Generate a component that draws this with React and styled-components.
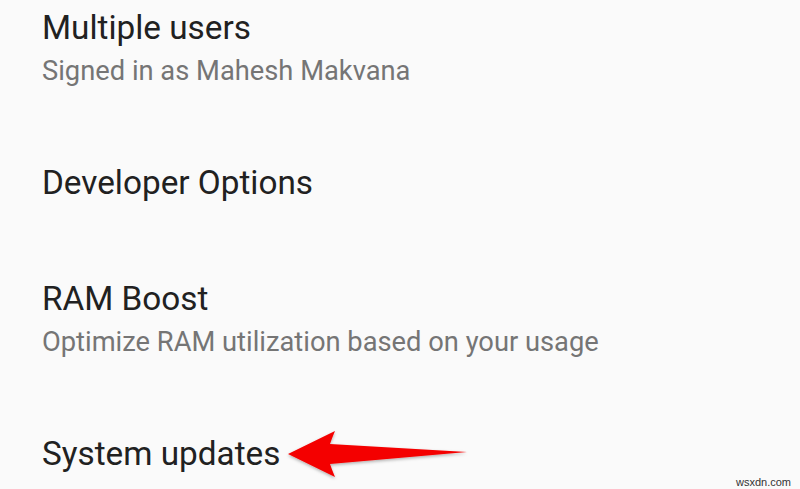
import styled, { createGlobalStyle } from 'styled-components';

const GlobalStyle = createGlobalStyle`
  html, body {
    margin: 0;
    padding: 0;
    background: #fafafa;
  }
  body {
    font-family: Roboto, "Noto Sans", "Liberation Sans", sans-serif;
  }
`;

const Screen = styled.div`
  position: relative;
  width: 800px;
  height: 489px;
  overflow: hidden;
  background: #fafafa;
`;

const SettingsList = styled.ul`
  list-style: none;
  margin: 0;
  padding: 8px 0 0 42px;
  display: flex;
  flex-direction: column;
  gap: 76px;
`;

const SettingItem = styled.li`
  display: flex;
  flex-direction: column;
  gap: 7px;
`;

const TitleRow = styled.div`
  display: flex;
  align-items: center;
  gap: 6px;
  height: 40px;
`;

const Title = styled.span`
  font-size: 33.3px;
  line-height: 40px;
  color: #212121;
`;

const Summary = styled.span`
  font-size: 27.3px;
  line-height: 32px;
  color: #757575;
`;

const ArrowSvg = styled.svg`
  flex: none;
  margin: -7px 0;
`;

const Watermark = styled.span`
  position: absolute;
  right: 9px;
  bottom: 1px;
  font-family: "Liberation Sans", Arial, sans-serif;
  font-size: 11px;
  color: #333;
`;

function PointerArrow() {
  return (
    <ArrowSvg width="186" height="54" viewBox="0 0 186 54">
      <defs>
        <filter id="arrowShadow" x="-10%" y="-20%" width="120%" height="150%">
          <feDropShadow dx="0" dy="1.5" stdDeviation="1.5" floodColor="#000" floodOpacity="0.3" />
        </filter>
      </defs>
      <path
        d="M2 27 L49 4 Q46 11 44 17 L181 25 L44 37 Q46 43 49 50 Z"
        fill="#f40000"
        filter="url(#arrowShadow)"
      />
    </ArrowSvg>
  );
}

const items = [
  { title: 'Multiple users', summary: 'Signed in as Mahesh Makvana' },
  { title: 'Developer Options' },
  { title: 'RAM Boost', summary: 'Optimize RAM utilization based on your usage' },
  { title: 'System updates', marked: true },
];

export default function App() {
  return (
    <Screen>
      <GlobalStyle />
      <SettingsList>
        {items.map((item) => (
          <SettingItem key={item.title}>
            <TitleRow>
              <Title>{item.title}</Title>
              {item.marked && <PointerArrow />}
            </TitleRow>
            {item.summary && <Summary>{item.summary}</Summary>}
          </SettingItem>
        ))}
      </SettingsList>
      <Watermark>wsxdn.com</Watermark>
    </Screen>
  );
}
